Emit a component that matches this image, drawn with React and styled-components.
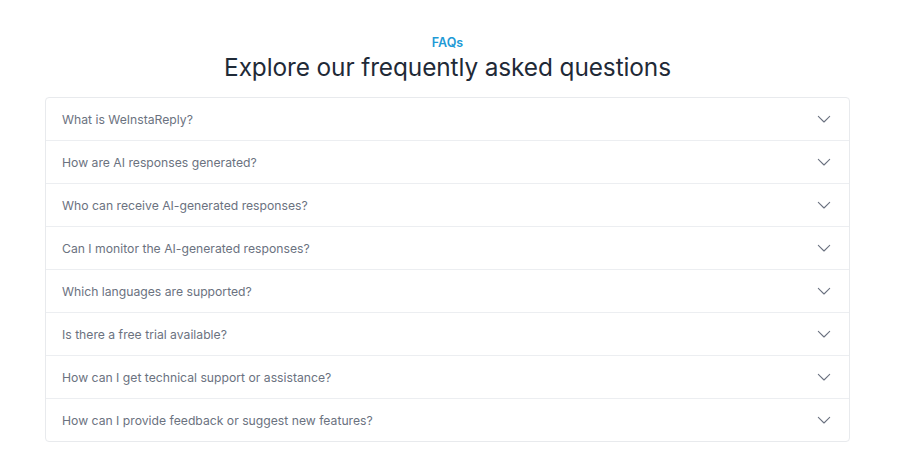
import React from "react";
import styled, { createGlobalStyle } from "styled-components";

const GlobalStyle = createGlobalStyle`
  body {
    margin: 0;
    background: #fff;
    font-family: Inter, "Noto Sans", Arial, sans-serif;
  }
`;

const Section = styled.section`
  padding: 34px 50px 20px 45px;
  display: flex;
  flex-direction: column;
  align-items: stretch;
`;

const Eyebrow = styled.p`
  margin: 0;
  text-align: center;
  font-size: 12.5px;
  font-weight: 600;
  line-height: 18px;
  color: #1e9ad6;
`;

const Heading = styled.h2`
  margin: 0;
  text-align: center;
  font-size: 24.4px;
  font-weight: 400;
  line-height: 30px;
  color: #1f2a37;
  letter-spacing: -0.1px;
`;

const Card = styled.div`
  margin-top: 15px;
  border: 1px solid #e8eaed;
  border-radius: 4px;
  overflow: hidden;
`;

const Row = styled.button`
  all: unset;
  box-sizing: border-box;
  display: flex;
  align-items: center;
  justify-content: space-between;
  width: 100%;
  height: ${(p) => (p.$first ? "42px" : "43px")};
  padding: 0 17px 0 16px;
  border-top: ${(p) => (p.$first ? "none" : "1px solid #eceef1")};
  cursor: pointer;
`;

const Question = styled.span`
  font-size: 12.2px;
  color: #6b7280;
`;

const Chevron = () => (
  <svg width="16" height="16" viewBox="0 0 24 24" fill="none" stroke="#6b7280" strokeWidth="1.6" strokeLinecap="round" strokeLinejoin="round">
    <path d="M3.5 8l8.5 8.5L20.5 8" />
  </svg>
);

const questions = [
  "What is WeInstaReply?",
  "How are AI responses generated?",
  "Who can receive AI-generated responses?",
  "Can I monitor the AI-generated responses?",
  "Which languages are supported?",
  "Is there a free trial available?",
  "How can I get technical support or assistance?",
  "How can I provide feedback or suggest new features?",
];

export default function App() {
  return (
    <>
      <GlobalStyle />
      <Section>
        <Eyebrow>FAQs</Eyebrow>
        <Heading>Explore our frequently asked questions</Heading>
        <Card>
          {questions.map((q, i) => (
            <Row key={q} $first={i === 0}>
              <Question>{q}</Question>
              <Chevron />
            </Row>
          ))}
        </Card>
      </Section>
    </>
  );
}
